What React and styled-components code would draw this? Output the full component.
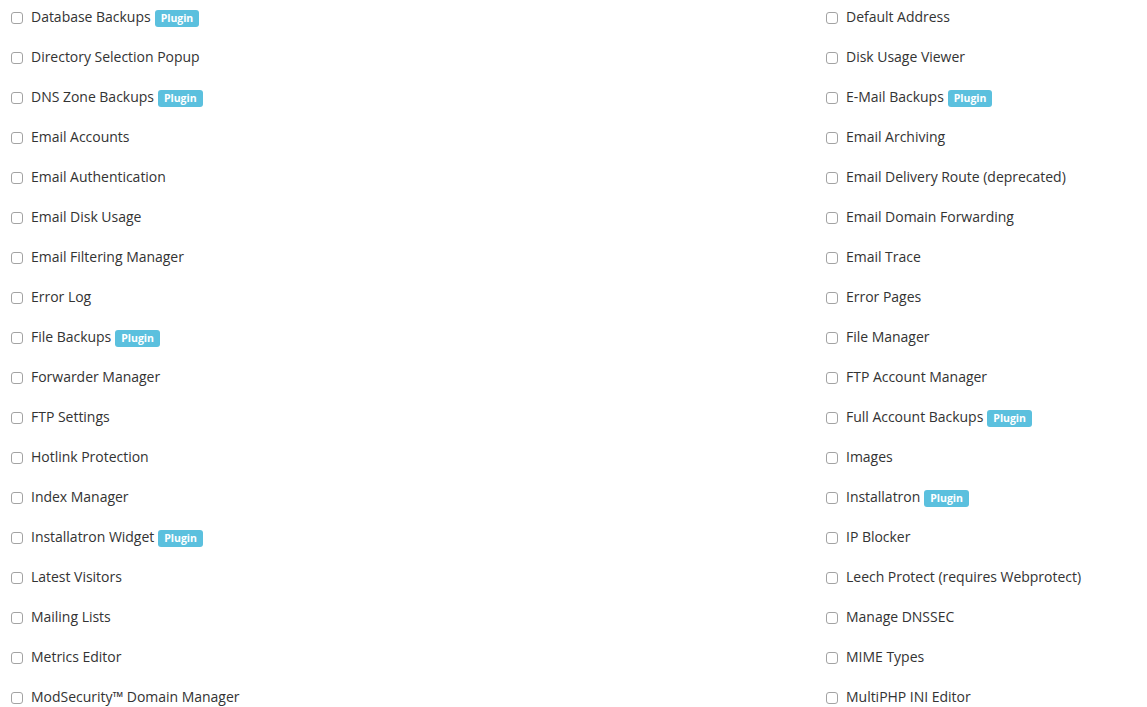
import React from 'react';
import styled, {createGlobalStyle} from 'styled-components';

const GlobalStyle = createGlobalStyle`
    body {
        margin: 0;
        background: #fff;
        font-family: "Open Sans", "Liberation Sans", sans-serif;
        color: #333;
    }
`;

const Grid = styled.div`
    display: grid;
    grid-template-columns: 815px 1fr;
    padding-top: 7px;
    row-gap: 20px;
`;

const Item = styled.label`
    display: flex;
    align-items: center;
    height: 20px;
    padding-left: 11px;
    font-size: 14px;
    line-height: 20px;
    letter-spacing: -0.02px;
    white-space: nowrap;
    cursor: pointer;
`;

const Check = styled.input.attrs({type: 'checkbox'})`
    appearance: none;
    box-sizing: border-box;
    width: 12px;
    height: 12px;
    margin: 1px 8px 0 0;
    border: 1px solid #a3a3a3;
    border-radius: 3px;
    background: #fff;

    &:checked {
        background: #5bc0de;
        border-color: #5bc0de;
    }
`;

const Badge = styled.span`
    display: inline-block;
    margin-left: 4px;
    margin-top: 2px;
    padding: 0 6px;
    height: 17px;
    line-height: 17px;
    background-color: #5bc0de;
    color: #fff;
    font-size: 10.5px;
    font-weight: 700;
    border-radius: 3px;
`;

const features = [
    ['Database Backups', true], ['Default Address'],
    ['Directory Selection Popup'], ['Disk Usage Viewer'],
    ['DNS Zone Backups', true], ['E-Mail Backups', true],
    ['Email Accounts'], ['Email Archiving'],
    ['Email Authentication'], ['Email Delivery Route (deprecated)'],
    ['Email Disk Usage'], ['Email Domain Forwarding'],
    ['Email Filtering Manager'], ['Email Trace'],
    ['Error Log'], ['Error Pages'],
    ['File Backups', true], ['File Manager'],
    ['Forwarder Manager'], ['FTP Account Manager'],
    ['FTP Settings'], ['Full Account Backups', true],
    ['Hotlink Protection'], ['Images'],
    ['Index Manager'], ['Installatron', true],
    ['Installatron Widget', true], ['IP Blocker'],
    ['Latest Visitors'], ['Leech Protect (requires Webprotect)'],
    ['Mailing Lists'], ['Manage DNSSEC'],
    ['Metrics Editor'], ['MIME Types'],
    ['ModSecurity™ Domain Manager'], ['MultiPHP INI Editor'],
];

const App = () => {
    return (
        <>
            <GlobalStyle />
            <Grid>
                {features.map(([name, plugin]) => (
                    <Item key={name}>
                        <Check />
                        {name}
                        {plugin && <Badge>Plugin</Badge>}
                    </Item>
                ))}
            </Grid>
        </>
    );
};

export default App;
